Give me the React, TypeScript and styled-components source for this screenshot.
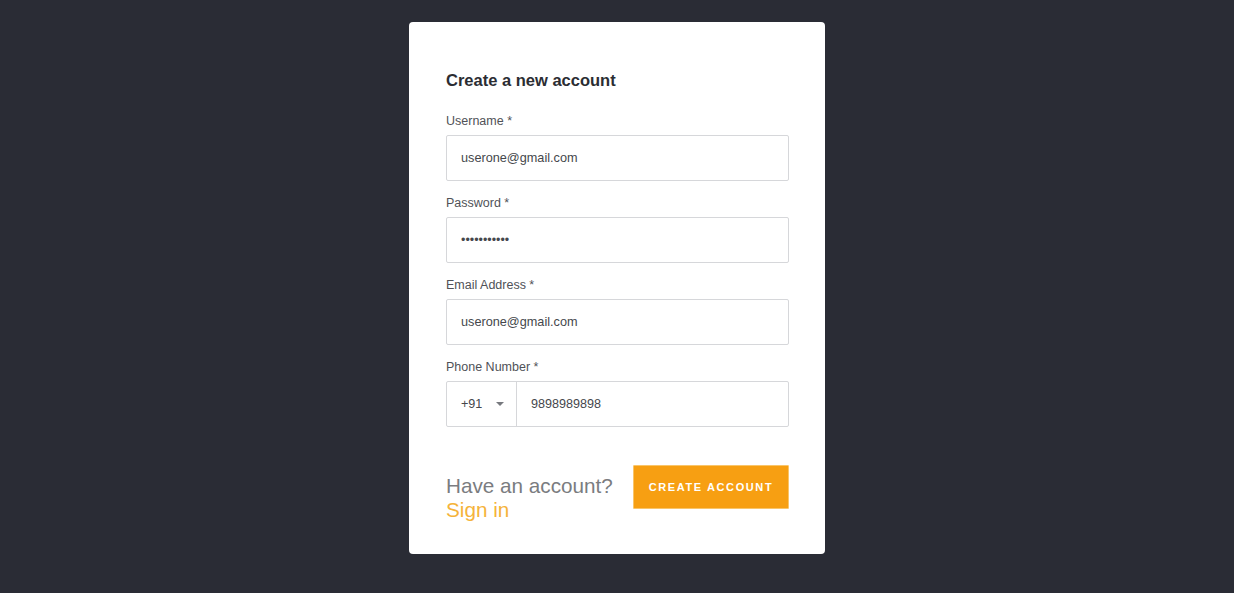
import React from "react";
import styled, { createGlobalStyle } from "styled-components";

const GlobalStyle = createGlobalStyle`
  * {
    box-sizing: border-box;
  }
  html, body {
    margin: 0;
    padding: 0;
    background: #2a2c35;
    font-family: "Liberation Sans", Arial, sans-serif;
  }
`;

const Page = styled.div`
  min-height: 593px;
  display: flex;
  justify-content: center;
  align-items: flex-start;
  padding-top: 22px;
`;

const Card = styled.div`
  width: 416px;
  background: #ffffff;
  border-radius: 4px;
  padding: 48px 36px 32px 37px;
  display: flex;
  flex-direction: column;
`;

const Title = styled.h1`
  margin: 0 0 23px;
  font-size: 16.5px;
  line-height: 20px;
  font-weight: 700;
  color: #2b2d33;
`;

const Form = styled.div`
  display: flex;
  flex-direction: column;
  gap: 14px;
`;

const Field = styled.label`
  display: flex;
  flex-direction: column;
  gap: 6px;
`;

const Label = styled.span`
  font-size: 12.5px;
  line-height: 16px;
  color: #505257;
`;

const Box = styled.div`
  height: 46px;
  border: 1px solid #d6d7da;
  border-radius: 2px;
  display: flex;
  align-items: stretch;
  background: #fff;
`;

const Input = styled.input<{ $size?: number }>`
  flex: 1;
  min-width: 0;
  border: none;
  outline: none;
  background: transparent;
  padding: 0 14px;
  font-family: "Liberation Sans", Arial, sans-serif;
  font-size: ${({ $size }) => $size ?? 12.7}px;
  color: #45474c;
`;

const CountryCode = styled.div`
  width: 70px;
  border-right: 1px solid #d6d7da;
  display: flex;
  align-items: center;
  justify-content: space-between;
  padding: 0 12px 0 14px;
  font-size: 12.6px;
  color: #45474c;
`;

const Caret = styled.span`
  width: 0;
  height: 0;
  border-left: 4px solid transparent;
  border-right: 4px solid transparent;
  border-top: 4px solid #77797e;
`;

const Footer = styled.div`
  margin-top: 38px;
  display: flex;
  justify-content: space-between;
  align-items: flex-start;
`;

const Prompt = styled.div`
  padding-top: 9px;
  font-size: 20.7px;
  line-height: 24px;
  color: #7a7c80;
`;

const SignIn = styled.a`
  display: block;
  color: #f5b33a;
  text-decoration: none;
`;

const Button = styled.button`
  width: 156px;
  height: 44px;
  border: 1px solid #f9c56a;
  border-radius: 1px;
  background: #f79f12;
  color: #ffffff;
  font-family: "Liberation Sans", Arial, sans-serif;
  font-size: 11px;
  font-weight: 700;
  letter-spacing: 1.6px;
  text-transform: uppercase;
  cursor: pointer;
`;

const App: React.FC = () => {
  return (
    <>
      <GlobalStyle />
      <Page>
        <Card>
          <Title>Create a new account</Title>
          <Form>
            <Field>
              <Label>Username *</Label>
              <Box>
                <Input defaultValue="userone@gmail.com" />
              </Box>
            </Field>
            <Field>
              <Label>Password *</Label>
              <Box>
                <Input type="password" defaultValue="12345678901" $size={12.5} />
              </Box>
            </Field>
            <Field>
              <Label>Email Address *</Label>
              <Box>
                <Input defaultValue="userone@gmail.com" />
              </Box>
            </Field>
            <Field>
              <Label>Phone Number *</Label>
              <Box>
                <CountryCode>
                  +91
                  <Caret />
                </CountryCode>
                <Input defaultValue="9898989898" $size={12.6} />
              </Box>
            </Field>
          </Form>
          <Footer>
            <Prompt>
              Have an account?
              <SignIn href="#">Sign in</SignIn>
            </Prompt>
            <Button>Create account</Button>
          </Footer>
        </Card>
      </Page>
    </>
  );
};

export default App;
